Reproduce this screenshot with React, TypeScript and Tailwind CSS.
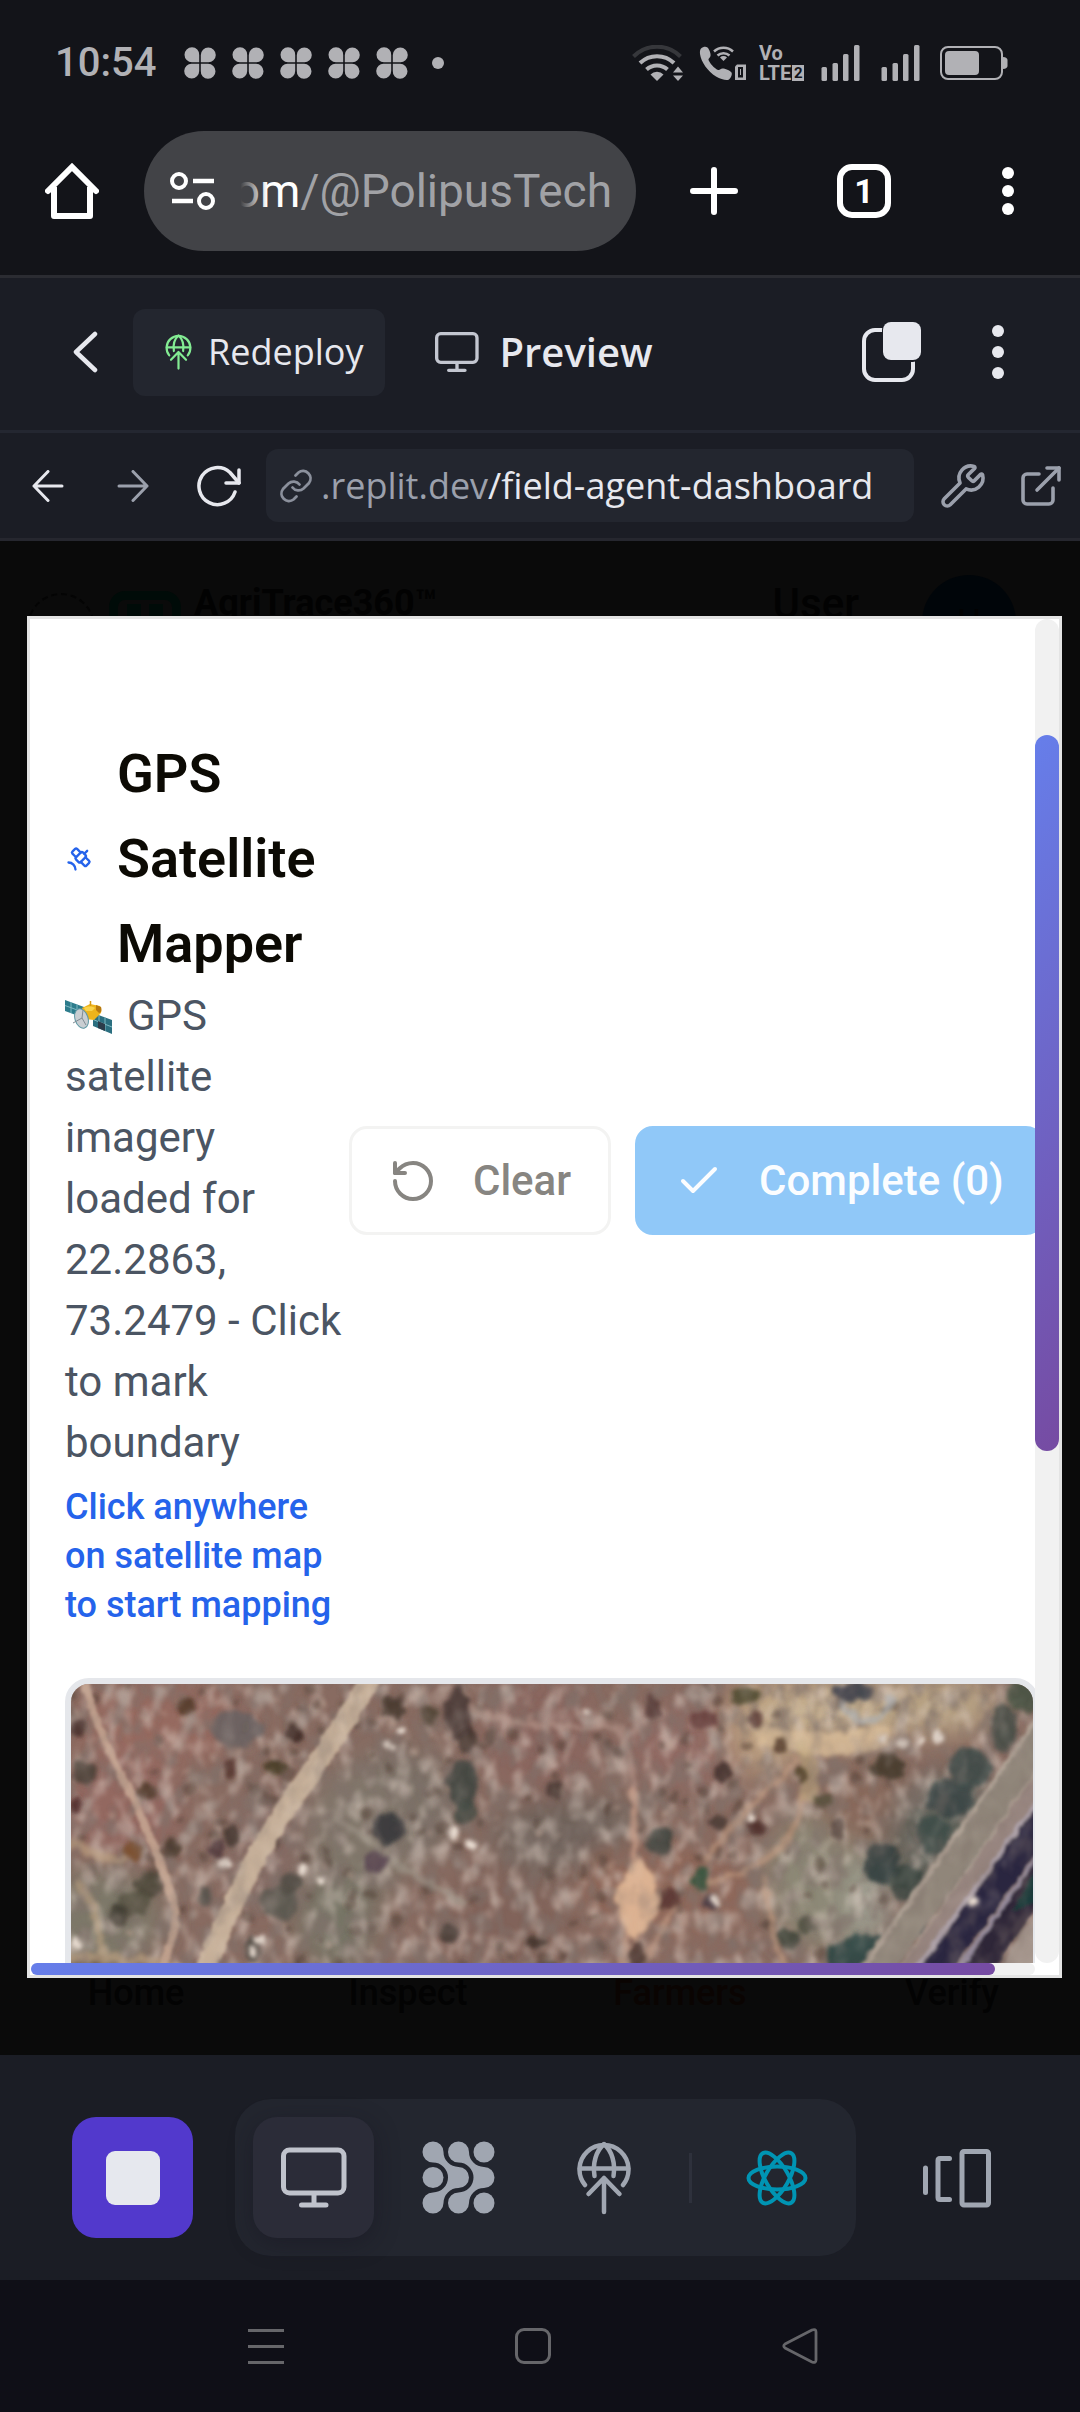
import type { ReactNode } from "react";
import { Check, ExternalLink, RotateCcw, Satellite, Wrench } from "lucide-react";

/* ---------- status bar ---------- */

function Clover() {
  return (
    <svg viewBox="0 0 32 32" className="size-8" fill="currentColor">
      {[0, 90, 180, 270].map((a) => (
        <path key={a} transform={`rotate(${a} 16 16)`} d="M15.2 15.2H8A7.5 7.5 0 0 1 8 0.2A7.3 7.3 0 0 1 15.2 8Z" />
      ))}
    </svg>
  );
}

function WifiBars() {
  return (
    <svg viewBox="0 0 51 36" className="h-9 w-[51px]" fill="none" stroke="currentColor" strokeWidth="4">
      <path d="M1.5 11.500A33 33 0 0 1 48.500 11.500" stroke="#36373b" />
      <path d="M8 18A24.500 24.500 0 0 1 42 18" />
      <path d="M14.500 24.500A15.500 15.500 0 0 1 35.500 24.500" />
      <path d="M25 36L18.500 29.500A9 9 0 0 1 31.500 29.500Z" fill="currentColor" stroke="none" />
      <path d="M41 27.500L46 21.500L51 27.500ZM41 30.500L46 36L51 30.500Z" fill="currentColor" stroke="none" />
    </svg>
  );
}

function WifiCall() {
  return (
    <svg viewBox="0 0 48 36" className="h-9 w-12" fill="none" stroke="currentColor">
      <path
        d="M2 3.500C4 1.500 7 1 8.500 2.500C10.500 4.500 12 9 11.500 11C11 13 9 13.500 9.500 15C11 18.500 15 23 19 25C21 25.500 21.500 23.500 23.500 23.500C26 23.500 31 25.500 32.500 27.500C33.500 29 32 33 30 34.500C28 36 22 34.500 17 31.500C9 26.500 2 17 1 9C0.800 6.500 1 4.500 2 3.500Z"
        fill="currentColor"
        stroke="none"
      />
      <path d="M15 6.500A14 14 0 0 1 34 6.500M18.500 10.500A9 9 0 0 1 30.500 10.500" strokeWidth="2.500" />
      <path d="M24.500 16L21 12.500A5 5 0 0 1 28 12.500Z" fill="currentColor" stroke="none" />
      <path d="M38 19.500H47V35H36V21.500Z" fill="currentColor" stroke="none" />
      <rect x="40" y="23" width="3" height="8.500" stroke="#131419" strokeWidth="2" />
    </svg>
  );
}

function SignalBars() {
  return (
    <svg viewBox="0 0 39 36" className="h-9 w-[39px]" fill="currentColor">
      <rect x="0.500" y="22" width="5.500" height="14" rx="1.500" />
      <rect x="11.500" y="18" width="5.500" height="18" rx="1.500" />
      <rect x="22" y="9" width="5.500" height="27" rx="1.500" />
      <rect x="33" y="0" width="5.500" height="36" rx="1.500" />
    </svg>
  );
}

function Battery() {
  return (
    <svg viewBox="0 0 68 34" className="h-[34px] w-[68px]" fill="currentColor">
      <rect x="1" y="1" width="61" height="32" rx="7" fill="none" stroke="currentColor" strokeWidth="2" />
      <rect x="5" y="5" width="34" height="24" rx="4" />
      <path d="M63 11C66 11 67.500 12.500 67.500 14V20C67.500 21.500 66 23 63 23Z" />
    </svg>
  );
}

function StatusBar() {
  return (
    <div className="flex h-[125px] items-center justify-between pr-[72px] pl-[55px] text-[#b1b1b5]">
      <div className="flex items-center gap-4">
        <span className="w-[113px] text-[40px] leading-[48px] font-medium">10:54</span>
        {[0, 1, 2, 3, 4].map((n) => (
          <Clover key={n} />
        ))}
        <span className="ml-2 size-3 rounded-full bg-current" />
      </div>
      <div className="flex items-center">
        <WifiBars />
        <span className="ml-4 flex">
          <WifiCall />
        </span>
        <span className="ml-3 w-[50px] text-[20px] leading-[20px] font-bold">
          <span className="block">Vo</span>
          <span className="flex items-center">
            LTE
            <span className="ml-px flex h-4 w-3 shrink-0 items-center justify-center bg-current text-[15px]">
              <span className="text-[#131419]">2</span>
            </span>
          </span>
        </span>
        <span className="ml-3 flex gap-[21px]">
          <SignalBars />
          <SignalBars />
        </span>
        <span className="ml-5 flex">
          <Battery />
        </span>
      </div>
    </div>
  );
}

/* ---------- browser toolbar ---------- */

function Kebab({ label, className }: { label: string; className: string }) {
  return (
    <button aria-label={label} className={className}>
      <span className="size-3 rounded-full bg-current" />
      <span className="size-3 rounded-full bg-current" />
      <span className="size-3 rounded-full bg-current" />
    </button>
  );
}

function BrowserBar() {
  return (
    <div className="flex h-[153px] items-start border-b-[3px] border-[#2b2c32] pt-[6px] pr-[66px] pl-[45px] text-white">
      <button aria-label="Home" className="flex h-[120px] items-center">
        <svg viewBox="0 0 54 56" className="h-14 w-[54px]" fill="none" stroke="currentColor" strokeWidth="6">
          <path d="M3 28L27 4L51 28" strokeLinecap="round" />
          <path d="M9 24V53H45V24" strokeLinejoin="round" />
        </svg>
      </button>
      <button className="ml-[45px] flex h-[120px] min-w-0 flex-1 items-center rounded-full bg-[#424347] pr-6 pl-[26px]">
        <svg viewBox="0 0 45 40" className="h-10 w-[45px] shrink-0" fill="none" stroke="currentColor" strokeWidth="4">
          <circle cx="9" cy="10" r="7" />
          <path d="M23 10H44M2 30H23" strokeWidth="4.500" />
          <circle cx="36" cy="30" r="7" />
        </svg>
        <span className="relative ml-2 flex min-w-0 flex-1 justify-end text-[46px] leading-[60px] whitespace-nowrap">
          <span>om</span>
          <span className="text-[#a1a2a6]">/@PolipusTech</span>
          <span className="absolute inset-y-0 left-0 w-11 bg-linear-to-r from-[#424347] from-40% to-[#424347]/0" />
        </span>
      </button>
      <button aria-label="New tab" className="ml-[54px] flex h-[120px] items-center">
        <svg viewBox="0 0 48 48" className="size-12" fill="none" stroke="currentColor" strokeWidth="6" strokeLinecap="round">
          <path d="M24 3V45M3 24H45" />
        </svg>
      </button>
      <button aria-label="Tabs" className="ml-[99px] flex h-[120px] items-center">
        <span className="flex size-[54px] items-center justify-center rounded-[15px] border-[6px] border-white text-[34px] leading-[34px] font-bold">
          1
        </span>
      </button>
      <Kebab label="Browser menu" className="ml-[111px] flex h-[120px] flex-col items-center justify-center gap-[6px]" />
    </div>
  );
}

/* ---------- workspace header ---------- */

function Monitor({ className }: { className: string }) {
  return (
    <svg viewBox="0 0 66 60" className={className} fill="none" stroke="currentColor" strokeWidth="5" strokeLinecap="round">
      <rect x="2.500" y="2.500" width="60.500" height="43" rx="6" />
      <path d="M33 46V57M20.500 57.500H45" />
    </svg>
  );
}

function GlobeUp({ className }: { className: string }) {
  return (
    <svg viewBox="0 0 54 74" className={className} fill="none" stroke="currentColor" strokeWidth="4.500" strokeLinecap="round" strokeLinejoin="round">
      <path d="M8 44A24.500 24.500 0 1 1 46 44" />
      <path d="M3 27.500H51" />
      <path d="M17.500 35C15.500 22 19 10 27 3C35 10 38.500 22 36.500 35" />
      <path d="M27 71V37M11.500 53L27 37L42.500 53" />
    </svg>
  );
}

function WorkspaceHeader() {
  return (
    <header className="flex h-[155px] items-center border-b-[3px] border-[#242731] bg-[#1b1d25] pr-[76px] pb-1 pl-[72px] font-['Open_Sans',sans-serif] text-[#e7e8ee]">
      <button aria-label="Back">
        <svg viewBox="0 0 26 42" className="h-[42px] w-[26px]" fill="none" stroke="currentColor" strokeWidth="4.500" strokeLinecap="round" strokeLinejoin="round">
          <path d="M23 3L4 21L23 39" />
        </svg>
      </button>
      <button className="ml-[35px] flex h-[87px] items-center gap-4 rounded-xl bg-[#23262f] pr-[22px] pl-8 text-[36px] leading-[48px]">
        <GlobeUp className="h-9 w-[27px] text-[#83ec93]" />
        Redeploy
      </button>
      <div className="ml-[50px] flex items-center gap-5">
        <Monitor className="h-10 w-11 text-[#c3c6d0]" />
        <h1 className="text-[40px] leading-[56px] font-semibold">Preview</h1>
      </div>
      <button aria-label="Open tabs" className="ml-auto">
        <svg viewBox="0 0 60 60" className="size-[60px]" fill="none">
          <rect x="2" y="8" width="49" height="50" rx="11" stroke="currentColor" strokeWidth="4" />
          <rect x="20" y="-1" width="40" height="41" rx="9" fill="#1b1d25" />
          <rect x="21" y="0" width="38" height="38" rx="8" fill="currentColor" />
        </svg>
      </button>
      <Kebab label="Pane menu" className="ml-[70px] flex flex-col gap-[9px]" />
    </header>
  );
}

function AddressRow() {
  return (
    <div className="flex h-[108px] items-center border-b-[3px] border-[#26272f] bg-[#1b1d25] pr-[15px] pl-[32px] font-['Open_Sans',sans-serif] text-[#e7e8ee]">
      <button aria-label="Go back">
        <svg viewBox="0 0 32 32" className="size-8" fill="none" stroke="currentColor" strokeWidth="3" strokeLinecap="round" strokeLinejoin="round">
          <path d="M30 16H2M16 1.500L2 16L16 30.500" />
        </svg>
      </button>
      <button aria-label="Go forward" className="ml-[53px] text-[#9ba0ac]">
        <svg viewBox="0 0 32 32" className="size-8" fill="none" stroke="currentColor" strokeWidth="3" strokeLinecap="round" strokeLinejoin="round">
          <path d="M2 16H30M16 1.500L30 16L16 30.500" />
        </svg>
      </button>
      <button aria-label="Reload" className="ml-12">
        <svg viewBox="0 0 44 42" className="h-[42px] w-11" fill="none" stroke="currentColor" strokeWidth="3.500" strokeLinecap="round" strokeLinejoin="round">
          <path d="M38 27A18.500 18.500 0 1 1 33 7.500L42 18" />
          <path d="M42 5V18H29" />
        </svg>
      </button>
      <button className="ml-[25px] flex h-[73px] min-w-0 flex-1 items-center rounded-xl bg-[#23262f] pl-[13px] text-[36px] leading-[48px] whitespace-nowrap">
        <svg viewBox="0 0 34 34" className="size-[34px] shrink-0 text-[#8b909c]" fill="none" stroke="currentColor" strokeWidth="2.800" strokeLinecap="round">
          <path d="M13.500 18.500A7.500 7.500 0 0 0 24.500 19.500L30 14A7.500 7.500 0 0 0 19.500 3.500L16.500 6.500" />
          <path d="M20.500 15.500A7.500 7.500 0 0 0 9.500 14.500L4 20A7.500 7.500 0 0 0 14.500 30.500L17.500 27.500" />
        </svg>
        <span className="ml-2 text-[#9ba0ac]">.replit.dev</span>
        <span>/field-agent-dashboard</span>
      </button>
      <button aria-label="Developer tools" className="ml-[25px] text-[#9ba0ac]">
        <Wrench className="size-12" strokeWidth={1.800} />
      </button>
      <button aria-label="Open in new window" className="ml-[30px] text-[#9ba0ac]">
        <ExternalLink className="size-12" strokeWidth={1.800} />
      </button>
    </div>
  );
}

/* ---------- satellite imagery ---------- */

const patches: [number, number, number, number, string][] = [
  [100, 40, 90, 40, "#966a60"],
  [330, 120, 60, 60, "#7a7066"],
  [40, 230, 60, 50, "#7d7869"],
  [290, 150, 50, 70, "#80766b"],
  [470, 50, 60, 60, "#8a665e"],
  [500, 150, 80, 40, "#70645b"],
  [590, 200, 90, 50, "#8f675a"],
  [620, 60, 70, 40, "#916b64"],
  [690, 40, 40, 50, "#b99d80"],
  [770, 25, 90, 32, "#c5ae8c"],
  [860, 20, 60, 30, "#b8a384"],
  [750, 190, 60, 70, "#8c8876"],
  [790, 120, 50, 40, "#88695c"],
  [790, 215, 24, 45, "#9c9b8e"],
  [200, 160, 40, 50, "#856a63"],
  [60, 120, 60, 50, "#936860"],
  [430, 230, 70, 50, "#81645a"],
  [270, 230, 40, 50, "#777466"],
  [870, 150, 60, 60, "#5e625a"],
];

const bushes: [number, number, number, number, string][] = [
  [15, 37, 8, 9, "#4a302c"],
  [120, 18, 8, 9, "#4d3020"],
  [170, 40, 26, 18, "#6a6362"],
  [226, 46, 9, 8, "#3d2a24"],
  [206, 78, 11, 8, "#453b25"],
  [163, 78, 6, 9, "#573931"],
  [20, 82, 12, 11, "#4b4038"],
  [80, 100, 8, 9, "#4e3526"],
  [13, 115, 7, 8, "#4c2a28"],
  [67, 160, 10, 9, "#7b4f2c"],
  [106, 157, 9, 10, "#4a3a2f"],
  [164, 144, 8, 8, "#463832"],
  [150, 158, 7, 11, "#4d3538"],
  [318, 137, 15, 16, "#36383b"],
  [306, 170, 12, 11, "#574451"],
  [322, 20, 11, 12, "#46372f"],
  [356, 26, 9, 10, "#4d4030"],
  [385, 25, 13, 26, "#4a3a36"],
  [393, 50, 9, 12, "#42332f"],
  [390, 95, 15, 25, "#414541"],
  [392, 120, 9, 12, "#454a43"],
  [84, 192, 14, 12, "#4a4538"],
  [70, 210, 15, 12, "#565344"],
  [54, 222, 10, 11, "#3f3b30"],
  [138, 204, 7, 10, "#5b554f"],
  [210, 210, 18, 16, "#5a5850"],
  [222, 190, 10, 12, "#514d45"],
  [376, 240, 10, 9, "#473a35"],
  [460, 248, 9, 8, "#42352c"],
  [62, 276, 15, 4, "#2e2728"],
  [185, 255, 8, 14, "#514c47"],
  [480, 100, 8, 10, "#4f3f39"],
  [575, 18, 8, 12, "#5a3f3a"],
  [625, 32, 12, 8, "#6a4240"],
  [666, 8, 14, 9, "#504a30"],
  [676, 30, 7, 9, "#5b3c33"],
  [644, 82, 8, 11, "#43302b"],
  [582, 150, 13, 13, "#3f423d"],
  [640, 132, 9, 9, "#4b3a35"],
  [676, 136, 8, 9, "#4d2f2a"],
  [592, 205, 10, 10, "#5b3833"],
  [622, 186, 8, 10, "#30523a"],
  [630, 210, 8, 7, "#4b3d47"],
  [700, 56, 7, 9, "#5b4331"],
  [722, 85, 6, 9, "#55462f"],
  [742, 108, 10, 5, "#57503a"],
  [756, 138, 8, 10, "#5b4a44"],
  [806, 78, 16, 12, "#453c2e"],
  [770, 4, 20, 9, "#3a3f4a"],
  [832, 230, 12, 12, "#3b4b51"],
  [725, 232, 8, 9, "#4a4d3e"],
  [708, 245, 11, 10, "#41473c"],
  [560, 262, 8, 14, "#4f3930"],
  [780, 262, 34, 20, "#2b4543"],
  [800, 172, 18, 20, "#323e3d"],
  [826, 190, 18, 18, "#39443f"],
  [866, 108, 22, 20, "#3a4745"],
  [886, 78, 20, 20, "#3d4a48"],
  [850, 145, 16, 20, "#3f4c49"],
  [918, 40, 12, 24, "#454c47"],
  [938, 8, 16, 16, "#485343"],
  [470, 280, 20, 12, "#51473c"],
];

const sparkles: [number, number, number][] = [
  [318, 56, 5], [328, 41, 4], [235, 178, 6], [252, 187, 5], [192, 244, 5], [186, 258, 5],
  [380, 142, 5], [398, 152, 5], [12, 250, 5], [512, 24, 4], [637, 208, 5], [673, 126, 4],
  [855, 48, 4], [838, 54, 4], [820, 54, 5], [800, 50, 4], [158, 172, 6], [888, 208, 5],
];

/* Small deterministic scatter of scrub between the larger bushes. */
const scrub = Array.from({ length: 300 }, (_, i) => {
  const a = Math.abs(Math.sin(i * 12.9898 + 4.1) * 43758.5453) % 1;
  const b = Math.abs(Math.sin(i * 78.233 + 1.7) * 24634.6345) % 1;
  const c = Math.abs(Math.sin(i * 39.425 + 9.3) * 13758.1234) % 1;
  return { x: a * 820, y: b * 340, r: 2 + c * 4, dark: c > 0.3 };
});

function SatelliteImagery() {
  return (
    <svg viewBox="0 0 962 340" preserveAspectRatio="xMidYMin slice" className="block h-full w-full">
      <defs>
        <filter id="soft" x="-20%" y="-20%" width="140%" height="140%">
          <feGaussianBlur stdDeviation="14" />
        </filter>
        <filter id="rough" x="-5%" y="-5%" width="110%" height="110%">
          <feTurbulence type="fractalNoise" baseFrequency="0.08" numOctaves="2" seed="4" />
          <feDisplacementMap in="SourceGraphic" scale="12" xChannelSelector="R" yChannelSelector="G" />
          <feGaussianBlur stdDeviation="2.200" />
        </filter>
        <filter id="lane" x="-5%" y="-5%" width="110%" height="110%">
          <feTurbulence type="fractalNoise" baseFrequency="0.09" numOctaves="2" seed="8" />
          <feDisplacementMap in="SourceGraphic" scale="6" xChannelSelector="R" yChannelSelector="G" />
          <feGaussianBlur stdDeviation="1.800" />
        </filter>
        <filter id="shade" x="0" y="0" width="100%" height="100%">
          <feTurbulence type="fractalNoise" baseFrequency="0.06 0.04" numOctaves="3" seed="11" />
          <feColorMatrix values="0 0 0 0 0.22  0 0 0 0 0.17  0 0 0 0 0.15  3 0 0 0 -1.3" />
          <feGaussianBlur stdDeviation="1.800" />
        </filter>
        <filter id="glint" x="0" y="0" width="100%" height="100%">
          <feTurbulence type="fractalNoise" baseFrequency="0.07 0.045" numOctaves="3" seed="29" />
          <feColorMatrix values="0 0 0 0 0.74  0 0 0 0 0.63  0 0 0 0 0.56  0 3 0 0 -1.4" />
          <feGaussianBlur stdDeviation="2.200" />
        </filter>
      </defs>
      <rect width="962" height="340" fill="#886b61" />
      <g filter="url(#soft)">
        {patches.map(([x, y, rx, ry, c]) => (
          <ellipse key={`${x}-${y}`} cx={x} cy={y} rx={rx} ry={ry} fill={c} />
        ))}
      </g>
      <rect width="962" height="340" filter="url(#shade)" opacity="0.55" />
      <rect width="962" height="340" filter="url(#glint)" opacity="0.5" />
      <g filter="url(#rough)">
        {scrub.map((s, i) => (
          <circle key={i} cx={s.x} cy={s.y} r={s.r} fill={s.dark ? "#4d3b33" : "#c3a898"} opacity={0.5} />
        ))}
        <g fill="none" strokeLinecap="round">
          <path d="M0 155C25 158 35 170 60 172M0 270C40 262 90 270 140 285M20 195C35 220 40 240 42 262" stroke="#c2a583" strokeWidth="9" opacity="0.6" />
          <path d="M270 130C300 155 340 185 395 215" stroke="#a39b8e" strokeWidth="7" opacity="0.6" />
          <path d="M400 25C440 38 480 45 545 40C555 60 560 80 562 105" stroke="#b29387" strokeWidth="5" opacity="0.7" />
          <path d="M562 105L560 190" stroke="#c59b87" strokeWidth="8" opacity="0.8" />
          <path d="M555 240C552 265 545 290 540 310M600 215C590 240 575 262 565 280" stroke="#c39c86" strokeWidth="5" opacity="0.7" />
          <path d="M720 75C690 100 660 140 630 170M725 110C720 150 700 180 630 195M690 190C690 230 700 260 720 300" stroke="#c09a80" strokeWidth="6" opacity="0.7" />
          <path d="M690 50C730 60 770 62 800 52" stroke="#d9bd98" strokeWidth="22" opacity="0.8" />
          <path d="M725 60C735 80 735 95 730 110" stroke="#c2ab80" strokeWidth="14" opacity="0.5" />
          <path d="M765 20C780 40 800 45 812 15" stroke="#a9b0ba" strokeWidth="8" opacity="0.6" />
        </g>
        <path d="M564 168C572 180 588 195 586 216C582 234 570 240 564 252C556 238 544 230 542 212C542 194 558 182 564 168Z" fill="#dcb292" />
        {bushes.map(([x, y, rx, ry, c]) => (
          <ellipse key={`${x}-${y}`} cx={x + 4} cy={y + 4} rx={rx} ry={ry} fill={c} opacity="0.9" />
        ))}
      </g>
      <g filter="url(#lane)" fill="none">
        <path d="M23 -5C35 40 52 75 72 112C88 148 102 180 114 222C112 248 104 262 96 290" stroke="#c8a894" strokeWidth="8" opacity="0.85" />
        <path d="M305 -8C275 45 240 95 215 130C190 170 160 230 135 300" stroke="#d0bba2" strokeWidth="20" opacity="0.85" />
        <path d="M1000 -5L760 331" stroke="#90867a" strokeWidth="30" />
        <path d="M1000 -30L755 320" stroke="#b0a396" strokeWidth="4" />
        <path d="M1000 22L775 345" stroke="#b5a79a" strokeWidth="5" />
        <path d="M1000 38L782 350" stroke="#97857f" strokeWidth="20" />
        <path d="M1000 55L790 345" stroke="#aca0a8" strokeWidth="6" />
        <path d="M1000 78L806 350" stroke="#2c2840" strokeWidth="26" />
        <path d="M1000 106L828 350" stroke="#958b9c" strokeWidth="6" />
        <path d="M1000 128L848 350" stroke="#2e2739" strokeWidth="26" />
        <path d="M930 222L975 148V205Z" fill="#173837" />
        <path d="M905 302L940 240L990 195V340H880Z" fill="#a4958c" />
      </g>
      <g filter="url(#rough)" fill="#e9ddd2">
        {sparkles.map(([x, y, r]) => (
          <circle key={`${x}-${y}`} cx={x + 4} cy={y + 4} r={r} />
        ))}
      </g>
      <rect width="962" height="340" filter="url(#shade)" opacity="0.3" />
      <rect width="962" height="340" filter="url(#glint)" opacity="0.12" />
    </svg>
  );
}

/* ---------- mapper dialog ---------- */

function SatelliteEmoji() {
  return (
    <svg viewBox="0 0 47 34" role="img" aria-label="satellite" className="mr-[15px] inline-block h-[34px] w-[47px] align-[-4px]">
      <path d="M0 0L19 7V18L0 11Z" fill="#2d7c8c" />
      <path d="M28 13L47 20V34L28 26Z" fill="#2b6f80" />
      <path d="M0 5.500L19 12.500M6 2V13M12 4.500V15.500M28 19.500L47 27M34 15.500V28.500M40 17.500V31" stroke="#7fb9c2" strokeWidth="1" />
      <path d="M33 21L40 24V31L33 28Z" fill="#2c3c4a" />
      <path d="M17 8L25 4L35 6C37 10 37 13 34 15L29 20L20 19Z" fill="#eeb41b" />
      <path d="M31 5L36 7C37 10 36 13 34 13L31 10Z" fill="#b8790f" />
      <path d="M19 8C22 6 28 6 30 8L27 11H21Z" fill="#f9d34c" />
      <path d="M25.500 1V6" stroke="#d89a14" strokeWidth="1.500" />
      <ellipse cx="16.500" cy="18.500" rx="6.500" ry="10" transform="rotate(-18 16.500 18.500)" fill="#c9ced2" stroke="#5e97a3" strokeWidth="1" />
      <path d="M8 23L17 18L18 10M17 18L21 25" stroke="#7f8c94" strokeWidth="1" fill="none" />
    </svg>
  );
}

function ActionButton({ className, icon, children }: { className: string; icon: ReactNode; children: ReactNode }) {
  return (
    <button
      disabled
      className={`flex h-[109px] shrink-0 items-center gap-9 rounded-[18px] border-[3px] px-[37px] text-[42px] leading-[60px] font-medium whitespace-nowrap ${className}`}
    >
      {icon}
      {children}
    </button>
  );
}

function MapperDialog() {
  return (
    <section
      role="dialog"
      aria-labelledby="mapper-title"
      className="absolute top-[75px] right-[18px] bottom-[77px] left-[27px] grid grid-cols-[minmax(0,1fr)_24px] grid-rows-[minmax(0,1fr)_12px] border-[3px] border-[#e4e4e4] bg-white"
    >
      <div className="min-h-0 overflow-hidden pt-28 pl-[35px]">
        <div className="flex items-center gap-1">
          <div className="w-[280px] shrink-0">
            <h2 id="mapper-title" className="flex items-center gap-6 text-[54px] leading-[85px] font-semibold text-[#0c0a04]">
              <Satellite className="size-7 shrink-0 text-[#2563eb]" />
              <span>GPS Satellite Mapper</span>
            </h2>
            <p className="-mt-px text-[42px] leading-[61px] text-[#4b5563]">
              <SatelliteEmoji />
              GPS satellite imagery loaded for 22.2863, 73.2479 - Click to mark boundary
            </p>
            <p className="mt-[10px] text-[36px] leading-[49px] font-medium text-[#2563eb]">
              Click anywhere on satellite map to start mapping
            </p>
          </div>
          <div className="flex gap-6">
            <ActionButton
              className="border-[#f3f3f2] bg-white text-[#878581]"
              icon={<RotateCcw className="size-12" />}
            >
              Clear
            </ActionButton>
            <ActionButton className="border-[#90c8f8] bg-[#90c8f8] text-[#fbfdff]" icon={<Check className="size-12" />}>
              Complete (0)
            </ActionButton>
          </div>
        </div>
        <div className="mt-12 -mr-1 h-[360px] overflow-hidden rounded-3xl border-[6px] border-[#e5e7eb]">
          <SatelliteImagery />
        </div>
      </div>
      <div className="rounded-full bg-[#f1f1f1] pt-[116px]">
        <div className="h-[716px] rounded-full bg-linear-[135deg] from-[#667eea] to-[#764ba2]" />
      </div>
      <div className="ml-px rounded-full bg-[#f1f1f1] pr-10">
        <div className="h-3 rounded-full bg-linear-[135deg] from-[#667eea] to-[#764ba2]" />
      </div>
    </section>
  );
}

function PreviewPane() {
  return (
    <main className="relative flex flex-1 flex-col justify-between overflow-hidden bg-[#0a0a0a]">
      <div className="flex h-[150px] items-start pt-[34px] pr-[64px] pl-[27px] text-[#020202]">
        <span className="mt-[18px] size-[68px] rounded-full border-2 border-dashed border-[#040404]" />
        <span className="mt-4 ml-[14px] flex size-[72px] justify-center rounded-2xl border-[9px] border-[#000b08] pt-1">
          <span className="size-9 border-x-[14px] border-[#000b08]" />
        </span>
        <span className="ml-[13px] text-[36px] leading-[56px] font-bold">AgriTrace360™</span>
        <span className="ml-auto text-[42px] leading-[58px] font-medium">User</span>
        <span className="ml-[63px] flex size-[94px] justify-center rounded-full bg-[#000509] pt-6 text-[36px] leading-[48px]">
          U
        </span>
      </div>
      <nav className="-mr-2 grid grid-cols-4 pb-[38px] text-center text-[36px] leading-[48px] font-medium text-[#030303]">
        <span>Home</span>
        <span>Inspect</span>
        <span className="text-[#0a0402]">Farmers</span>
        <span>Verify</span>
      </nav>
      <MapperDialog />
    </main>
  );
}

/* ---------- workspace dock and system navigation ---------- */

function AgentGrid() {
  const arm =
    "M21.500 11A15 15 0 0 0 36.500 26A10.500 10.500 0 0 1 36.500 47A15 15 0 0 0 21.500 62A10.500 10.500 0 1 1 11 51.500A15 15 0 0 0 11 21.500A10.500 10.500 0 1 1 21.500 11Z";
  return (
    <svg viewBox="0 0 73 73" className="size-[73px]" fill="currentColor">
      <path d={arm} />
      <path d={arm} transform="translate(25.500 0)" />
      <circle cx="11" cy="36.500" r="10.500" />
      <circle cx="62" cy="11" r="10.500" />
      <circle cx="62" cy="62" r="10.500" />
    </svg>
  );
}

function Dock() {
  return (
    <div className="flex h-[225px] items-start bg-[#1b1d25] pt-11 pr-[89px] pl-[72px] text-[#a0a6b1]">
      <button aria-label="Stop" className="mt-[18px] flex size-[121px] items-center justify-center rounded-3xl bg-[#5239cc]">
        <span className="size-[54px] rounded-[9px] bg-[#e6e8ee]" />
      </button>
      <div className="ml-[42px] flex h-[157px] items-center rounded-[36px] bg-[#23262f] pr-12 pl-[18px]">
        <button aria-label="Preview" className="flex size-[121px] items-center justify-center rounded-3xl bg-[#2b2c38] text-[#c0c3cc] shadow-[0_6px_24px_rgba(20,18,30,0.4)]">
          <Monitor className="h-[61px] w-[66px]" />
        </button>
        <button aria-label="Agent" className="ml-12">
          <AgentGrid />
        </button>
        <button aria-label="Deployments" className="ml-[82px]">
          <GlobeUp className="h-[74px] w-[54px]" />
        </button>
        <span className="ml-[58px] h-[50px] w-[3px] bg-[#2e313c]" />
        <button aria-label="React app" className="ml-[54px] text-[#0094b3]">
          <svg viewBox="0 0 62 62" className="size-[62px]" fill="none" stroke="currentColor" strokeWidth="4">
            {[0, 60, 120].map((a) => (
              <ellipse key={a} cx="31" cy="31" rx="28.500" ry="11.500" transform={`rotate(${a} 31 31)`} />
            ))}
          </svg>
        </button>
      </div>
      <button aria-label="Switch pane" className="mt-[49px] ml-auto">
        <svg viewBox="0 0 68 60" className="h-[60px] w-[68px]" fill="none" stroke="currentColor" strokeWidth="5" strokeLinecap="round" strokeLinejoin="round">
          <path d="M2.500 20V44.500M26.500 10.500H17Q15 10.500 15 12.500V49.500Q15 51.500 17 51.500H26.500" />
          <rect x="39" y="3.500" width="26.500" height="53.500" rx="2" />
        </svg>
      </button>
    </div>
  );
}

function SystemNav() {
  return (
    <nav className="flex h-[132px] items-center justify-between bg-[#0f0f17] pr-[262px] pl-[248px] text-[#66666a]">
      <button aria-label="Recent apps" className="flex flex-col gap-[13px]">
        <span className="h-[3px] w-9 bg-current" />
        <span className="h-[3px] w-9 bg-current" />
        <span className="h-[3px] w-9 bg-current" />
      </button>
      <button aria-label="Home screen" className="size-9 rounded-[9px] border-[3px] border-current" />
      <button aria-label="System back">
        <svg viewBox="0 0 36 36" className="size-9" fill="none" stroke="currentColor" strokeWidth="2.800" strokeLinejoin="round">
          <path d="M3 16L30 2Q34 0.500 34 4V32Q34 35.500 30 34L3 20Q0.500 18 3 16Z" />
        </svg>
      </button>
    </nav>
  );
}

export default function App() {
  return (
    <div className="flex min-h-screen flex-col bg-[#131419] font-['Roboto',sans-serif]">
      <StatusBar />
      <BrowserBar />
      <WorkspaceHeader />
      <AddressRow />
      <PreviewPane />
      <Dock />
      <SystemNav />
    </div>
  );
}
